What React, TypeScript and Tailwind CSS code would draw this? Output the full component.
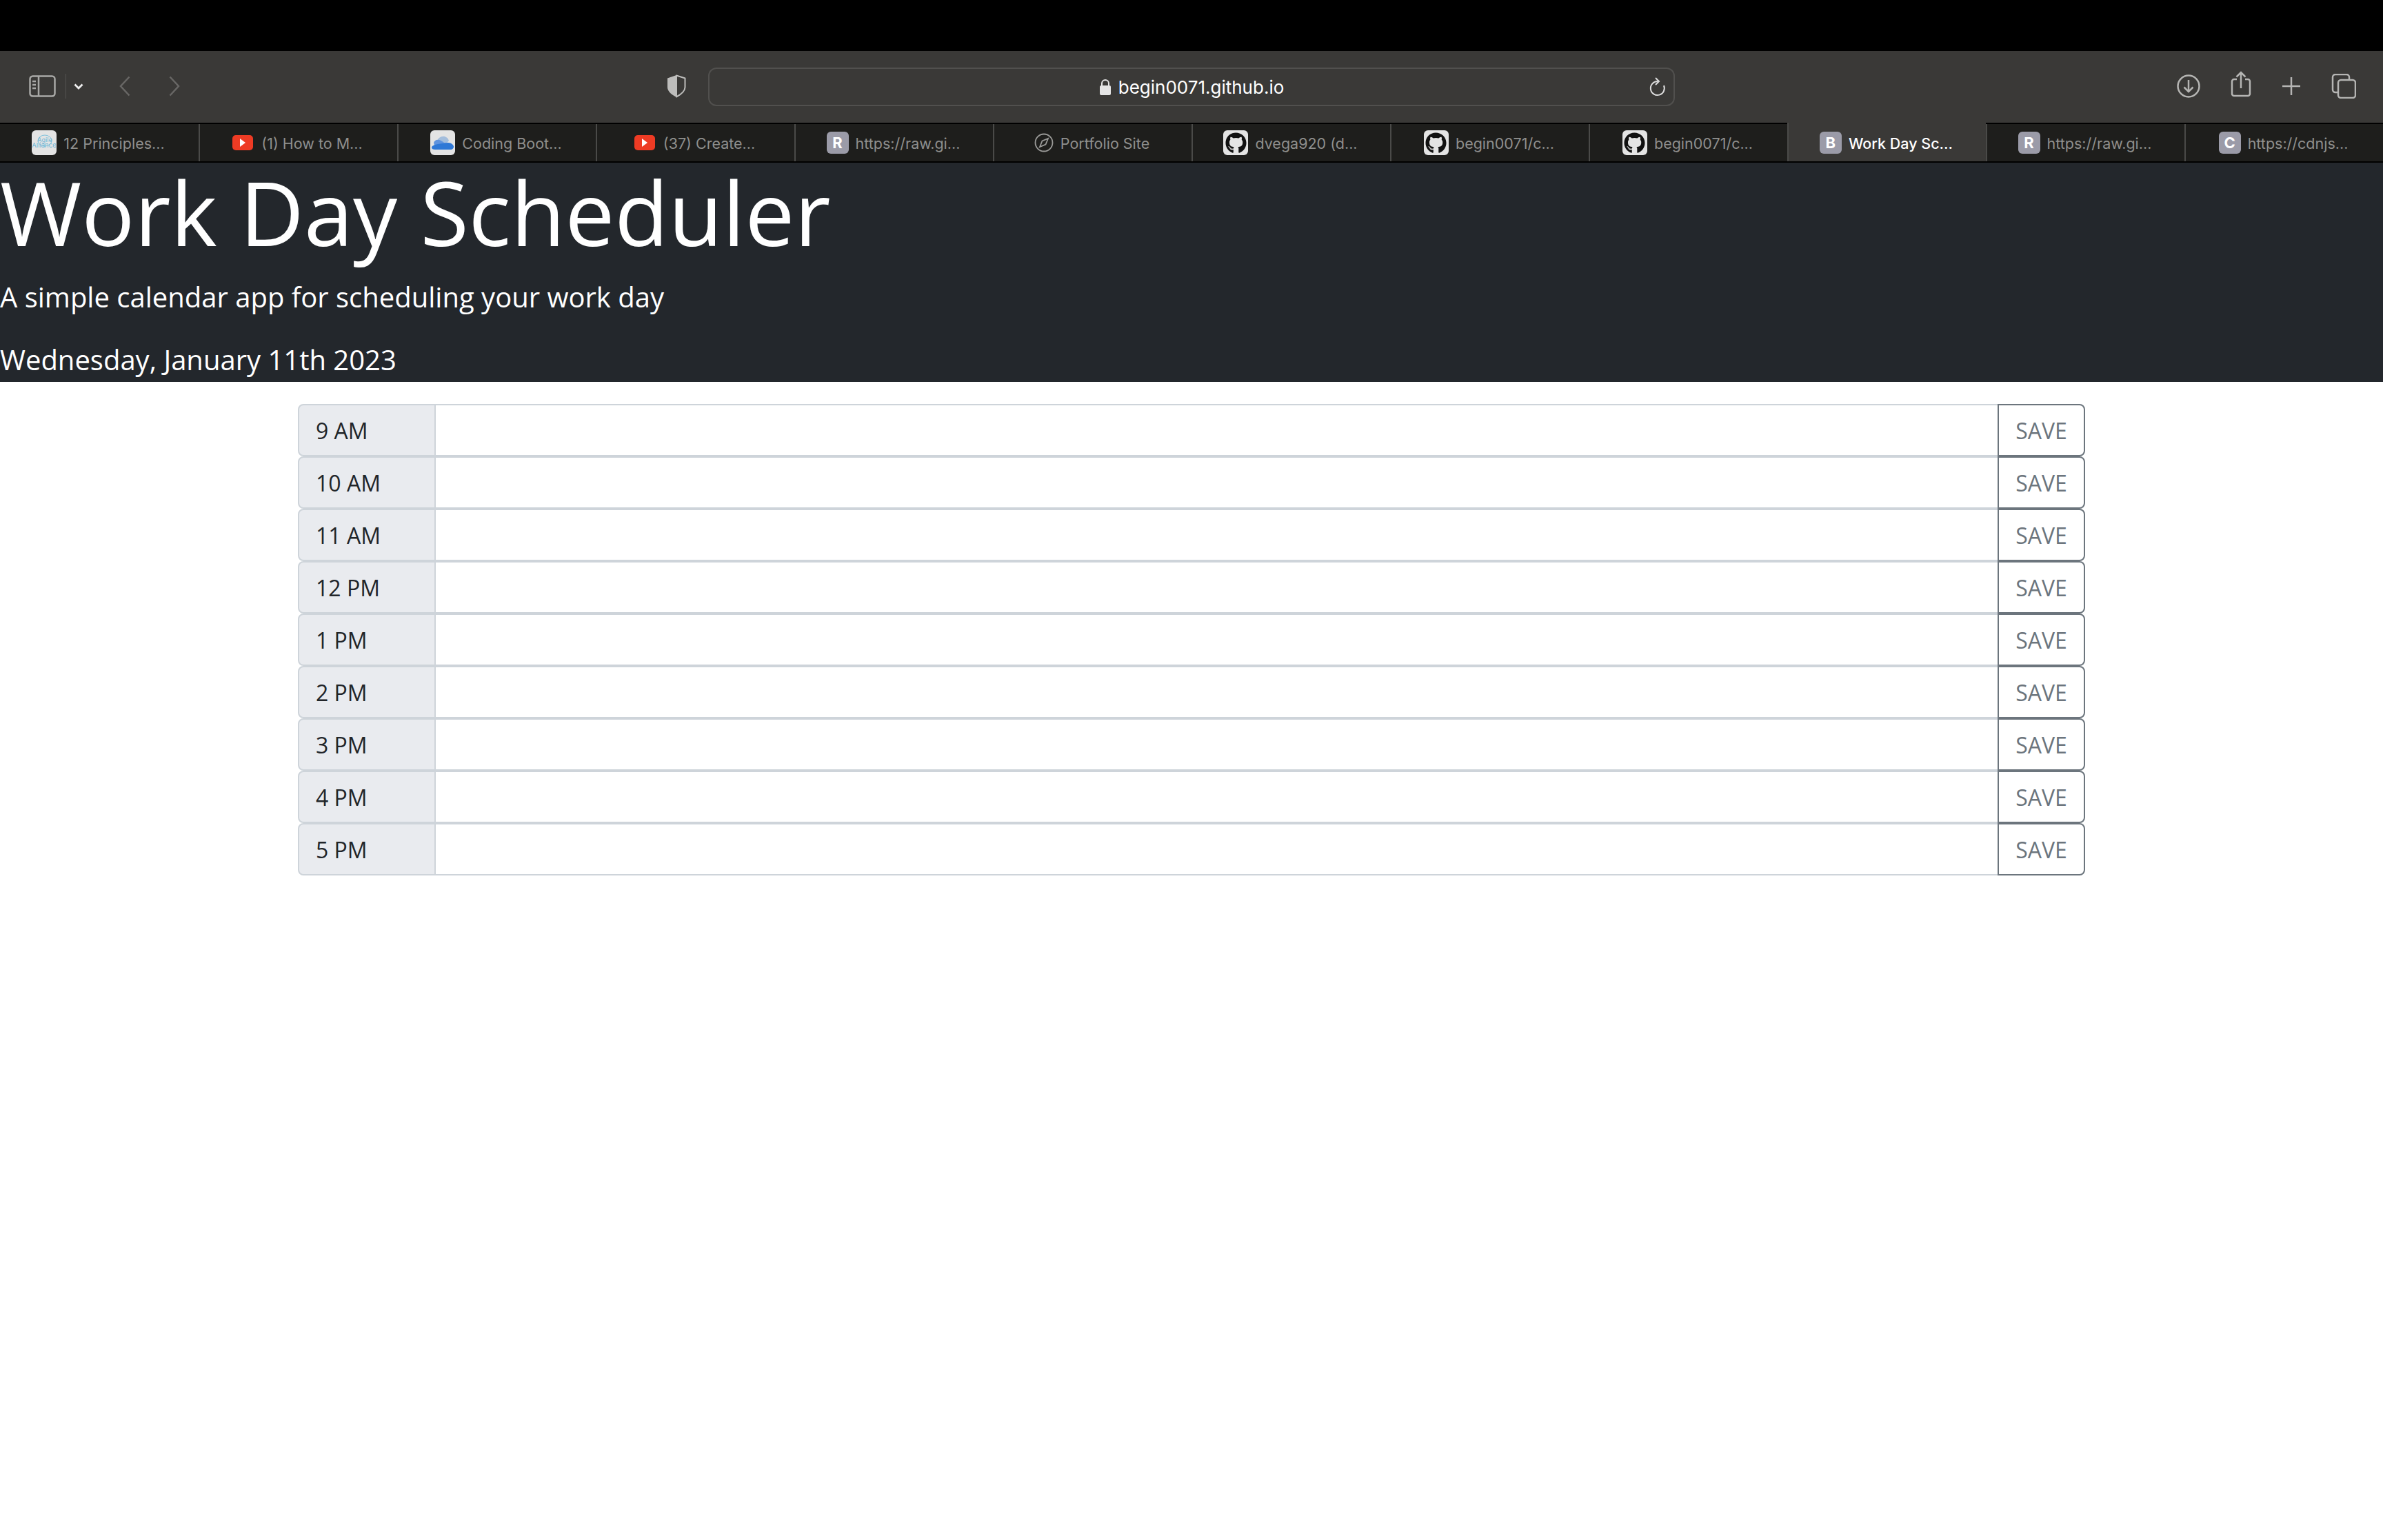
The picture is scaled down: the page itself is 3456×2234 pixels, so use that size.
import { FaGithub } from "react-icons/fa";

const tabs = [
  { title: "12 Principles...", icon: "agile" },
  { title: "(1) How to M...", icon: "youtube" },
  { title: "Coding Boot...", icon: "onedrive" },
  { title: "(37) Create...", icon: "youtube" },
  { title: "https://raw.gi...", icon: "R" },
  { title: "Portfolio Site", icon: "compass" },
  { title: "dvega920 (d...", icon: "github" },
  { title: "begin0071/c...", icon: "github" },
  { title: "begin0071/c...", icon: "github" },
  { title: "Work Day Sc...", icon: "B", active: true },
  { title: "https://raw.gi...", icon: "R" },
  { title: "https://cdnjs...", icon: "C" },
];

const hours = ["9 AM", "10 AM", "11 AM", "12 PM", "1 PM", "2 PM", "3 PM", "4 PM", "5 PM"];

function TabIcon({ icon }: { icon: string }) {
  if (icon === "github") {
    return (
      <div className="w-9 h-9 rounded-md bg-[#e4e4e4] flex items-center justify-center text-[#111]">
        <FaGithub size={31} />
      </div>
    );
  }

  if (icon === "youtube") {
    return (
      <div className="w-[30px] h-[22px] mr-[2px] rounded-[5px] bg-[#ee3b24] flex items-center justify-center">
        <svg width="8" height="12" viewBox="0 0 8 12">
          <path d="M0 0l8 6-8 6z" fill="#fff" />
        </svg>
      </div>
    );
  }

  if (icon === "agile") {
    return (
      <div className="w-9 h-9 rounded-md bg-[#e4e4e4] flex items-center justify-center">
        <svg width="34" height="34" viewBox="0 0 34 34" fill="none">
          <ellipse cx="18" cy="14" rx="10" ry="8" stroke="#7cc0dc" strokeWidth="1" />
          <text x="18" y="16" textAnchor="middle" fontSize="9" fill="#6db6d6" fontFamily="Inter, sans-serif">Agile</text>
          <text x="17" y="24" textAnchor="middle" fontSize="9.500" fill="#6db6d6" fontFamily="Inter, sans-serif">Alliance</text>
        </svg>
      </div>
    );
  }

  if (icon === "onedrive") {
    return (
      <div className="w-9 h-9 rounded-md bg-[#e4e4e4] flex items-center justify-center">
        <svg width="34" height="34" viewBox="0 0 34 34">
          <path d="M9 15c1-5 6-8 11-7 3 1 5 3 6 6l-5 6z" fill="#a3bddc" />
          <path d="M4 17c1-3 4-5 8-4 3 1 5 2 7 4l10 1-6 6H6z" fill="#5f93de" />
          <path d="M1 24c0-2 3-4 9-5l7-1 8-1c4 0 8 3 8 6 0 2-2 4-4 4H6c-3 0-5-1-5-3z" fill="#2f78d6" />
        </svg>
      </div>
    );
  }

  if (icon === "compass") {
    return (
      <svg width="28" height="28" viewBox="0 0 28 28" fill="none" stroke="#9a9a98" strokeWidth="1.800">
        <circle cx="14" cy="14" r="12.500" />
        <path d="M20 8l-3.500 8.500L8 20l3.500-8.500z" />
      </svg>
    );
  }

  return (
    <div className="w-8 h-8 rounded-md bg-[#9b9ba8] flex items-center justify-center text-[22px] font-bold text-white">
      {icon}
    </div>
  );
}

function Toolbar() {
  return (
    <div className="h-[104px] bg-[#3a3937] flex items-center pl-[42px] pr-[39px] pb-[2px]">
      {/* sidebar + back/forward */}
      <svg width="39" height="32" viewBox="0 0 39 32" fill="none" stroke="#a8a8a6" strokeWidth="2.500">
        <rect x="1.500" y="1.500" width="36" height="29" rx="4" />
        <path d="M14 2v28" />
        <path d="M5 9h5M5 14h5M5 19h5" />
      </svg>
      <div className="w-px h-[36px] bg-[#555452] ml-[14px]" />
      <svg className="ml-[11px]" width="14" height="9" viewBox="0 0 14 9" fill="none" stroke="#eeeeee" strokeWidth="2.800">
        <path d="M1.500 1.500L7 7l5.500-5.500" />
      </svg>
      <svg className="ml-[52px]" width="16" height="30" viewBox="0 0 16 30" fill="none" stroke="#686765" strokeWidth="2.500">
        <path d="M14.500 1.500L2 15l12.500 13.500" />
      </svg>
      <svg className="ml-[56px]" width="16" height="30" viewBox="0 0 16 30" fill="none" stroke="#686765" strokeWidth="2.500">
        <path d="M1.500 1.500L14 15 1.500 28.500" />
      </svg>

      {/* address bar */}
      <svg className="ml-[706px]" width="28" height="34" viewBox="0 0 28 34">
        <path d="M14 1.500l12.500 4v13c0 6-6 10.500-12.500 14z" fill="#3a3937" stroke="#bdbdbb" strokeWidth="2" strokeLinejoin="round" />
        <path d="M14 1L1 5.500v13c0 6 6 11 13 14.500z" fill="#bdbdbb" />
      </svg>
      <div className="ml-[32px] mt-[2px] w-[1402px] h-[56px] rounded-[12px] border-2 border-[#51504e] flex items-center relative">
        <div className="flex-1 flex items-center justify-center gap-[10px] font-['Inter',sans-serif] text-[26px] text-white">
          <svg width="18" height="24" viewBox="0 0 18 24">
            <path d="M4 11V7a5 5 0 0 1 10 0v4" fill="none" stroke="#e4e4e4" strokeWidth="2" />
            <rect x="1" y="10" width="16" height="14" rx="2" fill="#e4e4e4" />
          </svg>
          <span>begin0071.github.io</span>
        </div>
        <svg className="absolute right-[11px]" width="24" height="28" viewBox="0 0 24 28" fill="none" stroke="#dcdcdc" strokeWidth="2">
          <path d="M21 12A10 10 0 1 1 12 6" />
          <path d="M9 1l5 5-5 5" />
        </svg>
      </div>

      {/* right side actions */}
      <div className="ml-auto flex items-center gap-[44px]">
        <svg width="34" height="34" viewBox="0 0 34 34" fill="none" stroke="#b5b5b3" strokeWidth="2.500">
          <circle cx="17" cy="17" r="15.500" />
          <path d="M17 8v17M10.500 18.500L17 25l6.500-6.500" />
        </svg>
        <svg className="-mt-[6px]" width="30" height="38" viewBox="0 0 30 38" fill="none" stroke="#b5b5b3" strokeWidth="2.500">
          <path d="M9 12H5a3 3 0 0 0-3 3v18a3 3 0 0 0 3 3h20a3 3 0 0 0 3-3V15a3 3 0 0 0-3-3h-4" />
          <path d="M15 25V2M8.500 8.500L15 2l6.500 6.500" />
        </svg>
        <svg width="28" height="28" viewBox="0 0 28 28" fill="none" stroke="#b5b5b3" strokeWidth="2.500">
          <path d="M14 1v26M1 14h26" />
        </svg>
        <svg width="36" height="36" viewBox="0 0 36 36" fill="none" stroke="#b5b5b3" strokeWidth="2.500">
          <path d="M9 27H6a4 4 0 0 1-4-4V5a4 4 0 0 1 4-4h16a4 4 0 0 1 4 4v4" />
          <rect x="10" y="9" width="25" height="26" rx="4" />
        </svg>
      </div>
    </div>
  );
}

function TabBar() {
  return (
    <div className="grid grid-cols-12 h-[58px] bg-[#1e1e1c] border-y-2 border-black font-['Inter',sans-serif] text-[21.5px]">
      {tabs.map((tab, i) => (
        <div
          key={i}
          className={
            tab.active
              ? "bg-[#3a3937] -mt-[2px] pt-[2px] flex items-center justify-center gap-[10px] pr-[3px] text-white font-medium border-l-2 border-[#4a4a48]"
              : "flex items-center justify-center gap-[10px] pr-[3px] text-[#8f8f8d] border-l-2 first:border-l-0 border-[#4a4a48]"
          }
        >
          <TabIcon icon={tab.icon} />
          <span className="mt-[2px]">{tab.title}</span>
        </div>
      ))}
    </div>
  );
}

function HourRow({ hour }: { hour: string }) {
  return (
    <div className="flex h-[76px] text-[32px]">
      <div className="w-[200px] bg-[#e9ebef] border-2 border-[#ced4da] rounded-l-lg px-[24px] pt-[1px] flex items-center text-[#212529]">
        {hour}
      </div>
      <div className="flex-1 -ml-[2px] border-2 border-[#ced4da] bg-white" />
      <button className="w-[127px] -ml-[2px] pt-[1px] border-2 border-[#6c757d] rounded-r-lg text-[#6c757d]">
        SAVE
      </button>
    </div>
  );
}

export default function App() {
  return (
    <div className="min-h-[2234px] bg-white font-['Open_Sans',sans-serif]">
      <div className="h-[74px] bg-black" />
      <Toolbar />
      <TabBar />

      {/* page */}
      <header className="h-[318px] bg-[#23272c] text-white">
        <h1 className="text-[128px] font-normal leading-[144px]">Work Day Scheduler</h1>
        <p className="text-[40px] mt-[21px] leading-[60px]">A simple calendar app for scheduling your work day</p>
        <p className="text-[40px] mt-[31px] leading-[60px]">Wednesday, January 11th 2023</p>
      </header>

      <main className="w-[2592px] mx-auto mt-[32px]">
        {hours.map((hour) => (
          <HourRow key={hour} hour={hour} />
        ))}
      </main>
    </div>
  );
}
